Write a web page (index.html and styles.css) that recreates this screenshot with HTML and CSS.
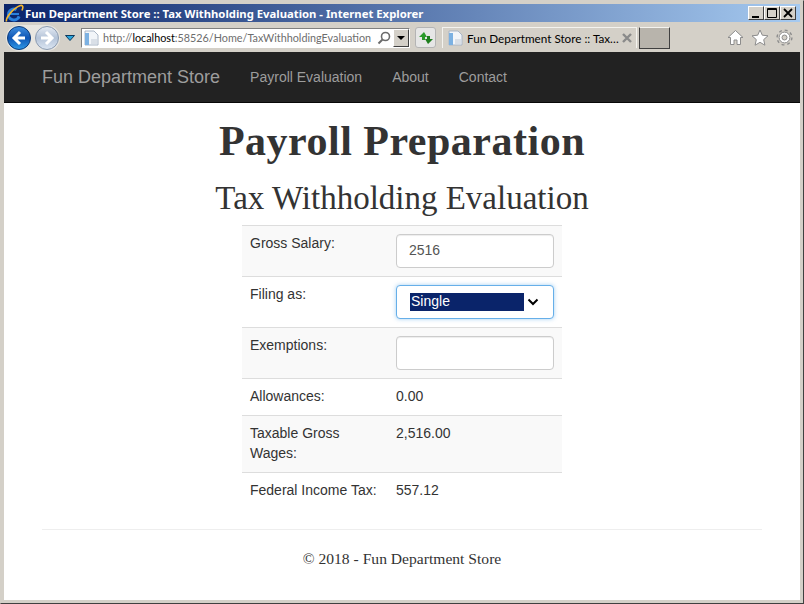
FILE: index.html
```html
<!DOCTYPE html>
<html lang="en">
<head>
    <meta charset="UTF-8">
    <meta name="viewport" content="width=device-width, initial-scale=1.0">
    <title>Fun Department Store :: Tax Withholding Evaluation</title>
    <link rel="stylesheet" href="styles.css">
</head>
<body>
    <div class="window">
        <div class="title-bar">
            <svg class="ie-logo" width="19" height="19" viewBox="0 0 19 19">
                <circle cx="9" cy="10.500" r="5.500" fill="none" stroke="#2a80dc" stroke-width="3" stroke-dasharray="26 8.500" transform="rotate(20 9 10.500)"/>
                <path d="M5 10h9" stroke="#2a80dc" stroke-width="2"/>
                <path d="M1.500 17.500C.5 14 8 4 15.500 1.500c2.500-.5 3 1.500 1.500 5" fill="none" stroke="#f4b62e" stroke-width="1.600"/>
            </svg>
            <span class="title-text">Fun Department Store :: Tax Withholding Evaluation - Internet Explorer</span>
            <div class="win-buttons">
                <span class="win-btn"><svg width="14" height="12" viewBox="0 0 14 12"><path d="M3 9h7v2H3z" fill="#000"/></svg></span>
                <span class="win-btn"><svg width="14" height="12" viewBox="0 0 14 12"><path d="M2.500 1.500h9v9h-9z M2 2.500h10" fill="none" stroke="#000"/></svg></span>
                <span class="win-btn"><svg width="14" height="12" viewBox="0 0 14 12"><path d="M3 2l8 8M11 2l-8 8" stroke="#000" stroke-width="1.800"/></svg></span>
            </div>
        </div>

        <div class="toolbar">
            <div class="nav-round">
                <svg width="26" height="26" viewBox="0 0 26 26">
                    <defs>
                        <linearGradient id="backFill" x1="0" y1="0" x2="0" y2="1">
                            <stop offset="0" stop-color="#3f8fe0"/>
                            <stop offset="0.5" stop-color="#0f55b4"/>
                            <stop offset="1" stop-color="#2f9ae8"/>
                        </linearGradient>
                    </defs>
                    <circle cx="13" cy="13" r="11.500" fill="url(#backFill)" stroke="#0d3a78"/>
                    <path d="M14 7l-6 6 6 6M8 13h11" fill="none" stroke="#fff" stroke-width="3"/>
                </svg>
                <svg width="26" height="26" viewBox="0 0 26 26">
                    <defs>
                        <linearGradient id="fwdFill" x1="0" y1="0" x2="0" y2="1">
                            <stop offset="0" stop-color="#e6ecf4"/>
                            <stop offset="0.5" stop-color="#b4c3d8"/>
                            <stop offset="1" stop-color="#dce6f2"/>
                        </linearGradient>
                    </defs>
                    <circle cx="13" cy="13" r="11.500" fill="url(#fwdFill)" stroke="#8b9bb0"/>
                    <path d="M12 7l6 6-6 6M18 13H7" fill="none" stroke="#fff" stroke-width="3"/>
                </svg>
            </div>
            <svg class="history-arrow" width="10" height="6" viewBox="0 0 10 6"><path d="M.5.5h9L5 5.500z" fill="#2ba4dc" stroke="#0e3a5c"/></svg>

            <div class="address-bar">
                <svg class="page-icon" width="15" height="16" viewBox="0 0 15 16">
                    <path d="M1 1h9l4 4v10H1z" fill="#f2f5f9" stroke="#aab6c6"/>
                    <path d="M1 3h4v12H1z" fill="#7cb1e2"/>
                    <path d="M7 9h6v5H7z" fill="#d9dfe7"/>
                </svg>
                <span class="url"><span class="url-dim">http://</span>localhost<span class="url-dim">:58526/Home/TaxWithholdingEvaluation</span></span>
                <svg class="search-icon" width="14" height="14" viewBox="0 0 14 14">
                    <circle cx="8.500" cy="5.500" r="4" fill="none" stroke="#6b6b6b" stroke-width="1.600"/>
                    <path d="M5.500 8.500L1.500 12.500" stroke="#6b6b6b" stroke-width="2"/>
                </svg>
                <span class="addr-drop"><svg width="8" height="4" viewBox="0 0 8 4"><path d="M0 0h8L4 4z" fill="#000"/></svg></span>
            </div>

            <span class="refresh-btn">
                <svg width="16" height="14" viewBox="0 0 16 14">
                    <path d="M6 1L1 6h3v3h3V6h2z" fill="#2a9a2a"/>
                    <path d="M10 13l5-5h-3V5H9v3H7z" fill="#1e7e1e"/>
                </svg>
            </span>

            <div class="tab">
                <svg class="page-icon" width="15" height="16" viewBox="0 0 15 16">
                    <path d="M1 1h9l4 4v10H1z" fill="#f2f5f9" stroke="#aab6c6"/>
                    <path d="M1 3h4v12H1z" fill="#7cb1e2"/>
                    <path d="M7 9h6v5H7z" fill="#d9dfe7"/>
                </svg>
                <span class="tab-title">Fun Department Store :: Tax…</span>
                <svg class="tab-close" width="10" height="10" viewBox="0 0 10 10"><path d="M1 1l8 8M9 1l-8 8" stroke="#8a8a8a" stroke-width="2.400"/></svg>
            </div>
            <span class="new-tab"></span>

            <div class="tools">
                <svg width="17" height="17" viewBox="0 0 17 17">
                    <path d="M8.500 1.500L16 8.500h-2.500V15.500h-3.500v-4.500H7v4.500H3.500V8.500H1z" fill="#fff" stroke="#8c8c8c"/>
                </svg>
                <svg width="18" height="17" viewBox="0 0 18 17">
                    <path d="M9 1l2.300 5.200 5.700.6-4.300 3.800 1.200 5.600L9 13.300l-4.900 2.900 1.200-5.600L1 6.800l5.700-.6z" fill="#fff" stroke="#8c8c8c"/>
                </svg>
                <svg width="17" height="17" viewBox="0 0 17 17">
                    <circle cx="8.500" cy="8.500" r="7.400" fill="none" stroke="#8c8c8c" stroke-width="1.400" stroke-dasharray="2.900 2.910"/>
                    <circle cx="8.500" cy="8.500" r="5.400" fill="#fff" stroke="#8c8c8c"/>
                    <circle cx="8.500" cy="8.500" r="2.500" fill="#d4d0c8" stroke="#8c8c8c"/>
                </svg>
            </div>
        </div>

        <div class="page">
            <nav class="navbar">
                <a class="brand" href="#">Fun Department Store</a>
                <a class="nav-link" href="#">Payroll Evaluation</a>
                <a class="nav-link" href="#">About</a>
                <a class="nav-link" href="#">Contact</a>
            </nav>

            <div class="container">
                <h1>Payroll Preparation</h1>
                <h2>Tax Withholding Evaluation</h2>

                <table class="tax-table">
                    <tr>
                        <td class="label">Gross Salary:</td>
                        <td class="control"><input class="field" type="text" value="2516"></td>
                    </tr>
                    <tr>
                        <td class="label">Filing as:</td>
                        <td class="control">
                            <div class="field select-box">
                                <span class="selected">Single</span>
                                <svg width="12" height="8" viewBox="0 0 12 8"><path d="M1.500 1.500L6 6l4.500-4.500" fill="none" stroke="#000" stroke-width="2"/></svg>
                            </div>
                        </td>
                    </tr>
                    <tr>
                        <td class="label">Exemptions:</td>
                        <td class="control"><input class="field" type="text"></td>
                    </tr>
                    <tr>
                        <td class="label">Allowances:</td>
                        <td>0.00</td>
                    </tr>
                    <tr>
                        <td class="label">Taxable Gross Wages:</td>
                        <td>2,516.00</td>
                    </tr>
                    <tr>
                        <td class="label">Federal Income Tax:</td>
                        <td>557.12</td>
                    </tr>
                </table>

                <hr>
                <footer>© 2018 - Fun Department Store</footer>
            </div>
        </div>
    </div>
</body>
</html>
```

FILE: styles.css
```css
html, body {
    margin: 0;
    padding: 0;
    height: 100%;
    overflow: hidden;
}

* {
    box-sizing: border-box;
}

.window {
    height: 604px;
    display: flex;
    flex-direction: column;
    background: #d4d0c8;
    border: 1px solid #404040;
    border-top-color: #d4d0c8;
    border-left-color: #d4d0c8;
    padding: 3px;
}

.title-bar {
    height: 18px;
    flex: none;
    display: flex;
    align-items: center;
    background: linear-gradient(90deg, #0a246a, #a6caf0);
    color: #fff;
    font: bold 11.300px "Noto Sans", sans-serif;
    white-space: nowrap;
}

.ie-logo {
    flex: none;
    margin: 0 1px 0 1px;
}

.win-buttons {
    margin-left: auto;
    display: flex;
    margin-right: 4px;
}

.win-btn {
    width: 16px;
    height: 14px;
    display: flex;
    align-items: center;
    justify-content: center;
    background: #d4d0c8;
    border: 1px solid;
    border-color: #fff #404040 #404040 #fff;
}

.toolbar {
    height: 30px;
    flex: none;
    display: flex;
    align-items: center;
    padding: 1px 0 0 2px;
    font: 12px Lato, sans-serif;
}

.nav-round {
    display: flex;
    gap: 2px;
    background: #e8e6e1;
    border-radius: 13px;
}

.history-arrow {
    margin-left: 5px;
    flex: none;
}

.address-bar {
    margin-left: 6px;
    width: 329px;
    height: 20px;
    display: flex;
    align-items: center;
    background: #fff;
    border: 1px solid;
    border-color: #808080 #fff #fff #808080;
    padding-left: 2px;
}

.page-icon {
    flex: none;
}

.url {
    margin-left: 4px;
    font-size: 10.800px;
    color: #000;
    white-space: nowrap;
}

.url-dim {
    color: #6d6d6d;
}

.search-icon {
    margin-left: auto;
    flex: none;
}

.addr-drop {
    width: 16px;
    height: 18px;
    margin-left: 2px;
    display: flex;
    align-items: center;
    justify-content: center;
    background: #d4d0c8;
    border: 1px solid;
    border-color: #fff #404040 #404040 #fff;
    flex: none;
}

.refresh-btn {
    width: 21px;
    height: 21px;
    margin-left: 5px;
    display: flex;
    align-items: center;
    justify-content: center;
    background: #e6e6e6;
    border: 1px solid #b4b4b4;
    border-radius: 3px;
}

.tab {
    width: 195px;
    height: 21px;
    margin-left: 6px;
    display: flex;
    align-items: center;
    padding-left: 5px;
    background: #d4d0c8;
    border: 1px solid #f4f3ef;
    border-bottom: none;
}

.tab-title {
    margin-left: 4px;
    font-size: 11.700px;
    color: #000;
    white-space: nowrap;
}

.tab-close {
    margin-left: auto;
    margin-right: 4px;
    flex: none;
}

.new-tab {
    width: 31px;
    height: 22px;
    margin-left: 2px;
    background: #b8b4ac;
    border: 1px solid;
    border-color: #f4f3ef #404040 #404040 #404040;
}

.tools {
    margin-left: auto;
    margin-right: 7px;
    display: flex;
    gap: 7px;
    align-items: center;
}

.page {
    flex: 1;
    background: #fff;
    overflow: hidden;
    color: #333;
    font: 14px/20px "Liberation Sans", sans-serif;
}

.navbar {
    height: 51px;
    display: flex;
    align-items: center;
    background: #222;
    border-bottom: 1px solid #080808;
    padding-left: 38px;
}

.navbar a {
    color: #9d9d9d;
    text-decoration: none;
}

.brand {
    font-size: 18px;
    margin-right: 30px;
}

.nav-link {
    margin-right: 30px;
}

.container {
    width: 720px;
    margin-left: 38px;
}

h1, h2 {
    font-family: "Liberation Serif", serif;
    text-align: center;
    color: #333;
    margin: 20px 0 10px;
}

h1 {
    font-size: 42px;
    line-height: 39px;
    letter-spacing: 0.5px;
    margin: 19px 0 21px;
}

h2 {
    font-size: 33px;
    line-height: 33px;
    font-weight: normal;
}

.tax-table {
    width: 320px;
    margin: 0 auto;
    border-collapse: collapse;
    table-layout: fixed;
}

.tax-table td {
    padding: 7px 8px 9px;
    border-top: 1px solid #ddd;
    vertical-align: top;
}

.tax-table td.label {
    width: 146px;
}

.tax-table td.control {
    padding: 8px;
}

.tax-table tr:nth-child(odd) {
    background: #f9f9f9;
}

.field {
    display: block;
    width: 158px;
    height: 34px;
    padding: 5px 12px 7px;
    font: 14px/20px "Liberation Sans", sans-serif;
    color: #555;
    background: #fff;
    border: 1px solid #ccc;
    border-radius: 4px;
    box-shadow: inset 0 1px 1px rgba(0, 0, 0, 0.075);
}

.select-box {
    display: flex;
    align-items: center;
    padding: 0 0 0 13px;
    border-color: #66afe9;
    box-shadow: 0 0 4px rgba(102, 175, 233, 0.6);
}

.selected {
    width: 114px;
    height: 18px;
    line-height: 17px;
    padding-left: 1px;
    background: #0a246a;
    color: #fff;
}

.select-box svg {
    margin-left: 3px;
}

hr {
    margin: 20px 0 19px;
    border: 0;
    border-top: 1px solid #eee;
}

footer {
    font-family: "Liberation Serif", serif;
    font-size: 15.600px;
    text-align: center;
    color: #333;
}
```
